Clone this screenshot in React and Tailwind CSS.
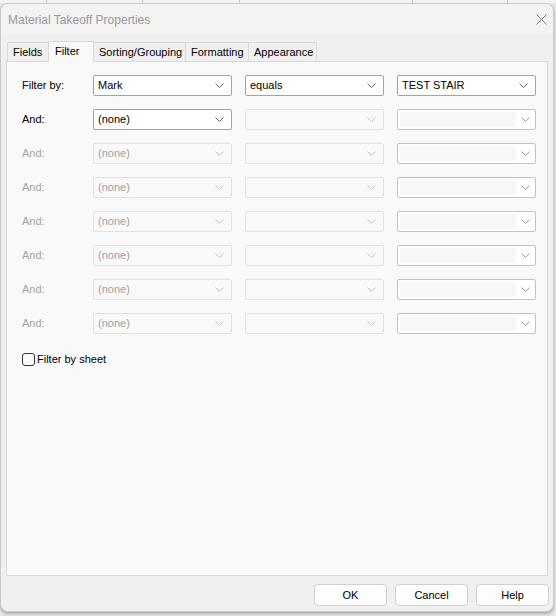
import React from 'react';

const FONT = { fontFamily: '"Liberation Sans", Arial, sans-serif' };

/* ─── Dropdown chevron ─────────────────────────────────────── */
const Chevron = ({ color }) => (
  <svg width="9" height="5" viewBox="0 0 9 5" className="shrink-0">
    <polyline points="0.5,0.5 4.5,4.5 8.5,0.5" fill="none" stroke={color} strokeWidth="1" />
  </svg>
);

/* ─── Combo box (enabled / disabled / disabled editable) ───── */
const Combo = ({ text, mode }) => {
  if (mode === 'enabled') {
    return (
      <div className="w-[139px] h-[21px] flex items-center justify-between pl-[4px] pr-[7px] bg-white border border-[#a3a3a3] rounded-[2px] text-black">
        <span>{text}</span>
        <Chevron color="#666666" />
      </div>
    );
  }
  if (mode === 'edit') {
    return (
      <div className="w-[139px] h-[21px] flex items-center justify-between pl-[2px] pr-[5px] bg-white border border-[#c2c2c2] rounded-[2px]">
        <div className="w-[116px] h-[15px] bg-[#f7f7f7]" />
        <Chevron color="#9a9a9a" />
      </div>
    );
  }
  return (
    <div className="w-[139px] h-[21px] flex items-center justify-between pl-[4px] pr-[7px] bg-[#f9f9f9] border border-[#e3e3e3] rounded-[2px] text-[#a2a2a2]">
      <span>{text}</span>
      <Chevron color="#c4c4c4" />
    </div>
  );
};

/* ─── One filter row ───────────────────────────────────────── */
const FilterRow = ({ label, active, values, modes }) => (
  <div className="flex items-center h-[21px]">
    <div className={`w-[71px] ${active ? 'text-black' : 'text-[#a2a2a2]'}`}>{label}</div>
    <div className="flex gap-[13px]">
      <Combo text={values[0]} mode={modes[0]} />
      <Combo text={values[1]} mode={modes[1]} />
      <Combo text={values[2]} mode={modes[2]} />
    </div>
  </div>
);

const rows = [
  { label: 'Filter by:', active: true, values: ['Mark', 'equals', 'TEST STAIR'], modes: ['enabled', 'enabled', 'enabled'] },
  { label: 'And:', active: true, values: ['(none)', '', ''], modes: ['enabled', 'disabled', 'edit'] },
  ...Array.from({ length: 6 }, () => ({
    label: 'And:', active: false, values: ['(none)', '', ''], modes: ['disabled', 'disabled', 'edit'],
  })),
];

const tabs = ['Fields', 'Filter', 'Sorting/Grouping', 'Formatting', 'Appearance'];
const tabWidths = ['w-[42px]', 'w-[46px]', 'w-[93px]', 'w-[64px]', 'w-[69px]'];

const Button = ({ children }) => (
  <button className="w-[73px] h-[22px] flex items-center justify-center bg-[#fdfdfd] border border-[#d0d0d0] rounded-[4px] text-black">
    {children}
  </button>
);

export default function App() {
  return (
    <div className="w-[556px] h-[616px] bg-[#e6e6e6] flex flex-col overflow-hidden text-[11px] leading-none" style={FONT}>
      {/* Window behind the dialog */}
      <div className="h-[3px] flex shrink-0 bg-[#f3f3f3]">
        <div className="w-[47px] border-r border-[#cfcfcf]" />
        <div className="w-[96px] border-r border-[#cfcfcf]" />
        <div className="w-[97px] border-r border-[#cfcfcf]" />
        <div className="w-[173px] border-r border-[#cfcfcf]" />
        <div className="w-[95px] border-r border-[#cfcfcf]" />
      </div>

      <div className="w-[554px] h-[609px] flex flex-col bg-[#f0f0f0] border border-[#c9c9c9] rounded-t-[8px] rounded-b-[8px] shadow-[0_2px_3px_rgba(0,0,0,0.25)] shrink-0">
        {/* Title bar */}
        <div className="h-[31px] flex items-center justify-between pl-[7px] pr-[6px] bg-[#f3f3f3] rounded-t-[8px] shrink-0">
          <span className="text-[12px] text-[#9a9a9a]">Material Takeoff Properties</span>
          <svg width="11" height="11" viewBox="0 0 11 11">
            <path d="M0.5 0.5 L10.5 10.5 M10.5 0.5 L0.5 10.5" stroke="#7a7a7a" strokeWidth="1" />
          </svg>
        </div>

        <div className="flex flex-col pl-[5px] pr-[5px] pt-[6px]">
          {/* Tab strip */}
          <div className="h-[20px] flex items-end pl-px">
            {tabs.map((t, i) => (
              i === 1 ? (
                <div key={t} className={`${tabWidths[i]} h-[21px] -mb-px -ml-px relative z-10 flex items-center pl-[6px] pb-[2px] bg-[#f9f9f9] border border-b-0 border-[#d9d9d9] text-black`}>
                  {t}
                </div>
              ) : (
                <div key={t} className={`${tabWidths[i]} h-[19px] ${i > 0 ? '-ml-px' : ''} flex items-center pl-[5px] bg-[#f0f0f0] border border-b-0 border-[#d9d9d9] text-black`}>
                  {t}
                </div>
              )
            ))}
          </div>

          {/* Tab panel */}
          <div className="w-[542px] h-[515px] flex flex-col bg-[#f9f9f9] border border-[#d9d9d9] pt-[13px] pl-[15px]">
            <div className="flex flex-col gap-[13px]">
              {rows.map((r, i) => (
                <FilterRow key={i} {...r} />
              ))}
            </div>
            <label className="mt-[19px] flex items-center gap-[2px] text-black">
              <span className="w-[13px] h-[13px] border border-[#333333] rounded-[3px] bg-[#fbfbfb]" />
              Filter by sheet
            </label>
          </div>

          {/* Dialog buttons */}
          <div className="flex justify-end gap-[8px] mt-[8px] -mr-px">
            <Button>OK</Button>
            <Button>Cancel</Button>
            <Button>Help</Button>
          </div>
        </div>
      </div>
    </div>
  );
}
